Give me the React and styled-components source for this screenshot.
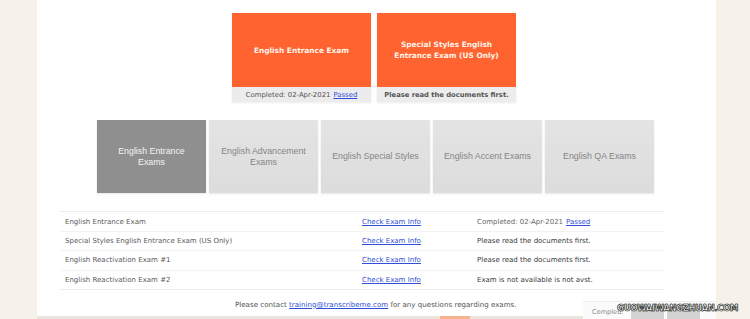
import React from 'react';
import styled, { createGlobalStyle } from 'styled-components';

const GlobalStyle = createGlobalStyle`
  html, body {
    margin: 0;
    padding: 0;
    background: #f6f2ea;
  }
  body {
    width: 750px;
    height: 319px;
    overflow: hidden;
    font-family: "DejaVu Sans", Verdana, sans-serif;
  }
`;

const Page = styled.div`
  position: relative;
  display: flex;
  width: 750px;
  height: 319px;
  background: #f6f2ea;
`;

const Main = styled.div`
  width: 679px;
  margin-left: 37px;
  height: 316px;
  background: #ffffff;
  display: flex;
  flex-direction: column;
`;

const CardsRow = styled.div`
  display: flex;
  gap: 6px;
  margin: 13px 0 0 195px;
`;

const Card = styled.div`
  width: 139px;
  display: flex;
  flex-direction: column;
  box-shadow: 0 1px 2px rgba(0, 0, 0, 0.08);
`;

const CardTitle = styled.div`
  height: 74px;
  background: #ff6430;
  color: #fff4ec;
  font-weight: bold;
  font-size: 7.4px;
  line-height: 11px;
  display: flex;
  align-items: center;
  justify-content: center;
  text-align: center;
  padding: 0 14px;
`;

const CardStatus = styled.div`
  height: 15px;
  background: #ececec;
  color: #555;
  font-size: ${({ strong }) => (strong ? '6.75px' : '6.9px')};
  display: flex;
  align-items: center;
  justify-content: center;
  font-weight: ${({ strong }) => (strong ? 'bold' : 'normal')};
`;

const Link = styled.a`
  color: #2f4fd8;
  text-decoration: underline;
  margin-left: ${({ gap }) => gap || 0}px;
`;

const TabsRow = styled.div`
  display: flex;
  gap: 3px;
  margin: 18px 0 0 60px;
`;

const Tab = styled.div`
  width: 109px;
  height: 73px;
  background: ${({ active }) => (active ? '#8f8f8f' : 'linear-gradient(#e4e4e4, #dcdcdc)')};
  color: ${({ active }) => (active ? '#f4f4f4' : '#858585')};
  font-family: "Liberation Sans", Arial, sans-serif;
  font-size: 8.8px;
  line-height: 10.5px;
  display: flex;
  align-items: center;
  justify-content: center;
  text-align: center;
  padding: 0 10px;
  box-sizing: border-box;
  box-shadow: 0 1px 2px rgba(0, 0, 0, 0.1);
`;

const TabLabel = styled.span`
  max-width: 88px;
  white-space: ${({ nowrap }) => (nowrap ? 'nowrap' : 'normal')};
`;

const Table = styled.div`
  width: 605px;
  margin: 18px 0 0 23px;
  border-top: 1px solid #ececec;
  border-bottom: 1px solid #ececec;
`;

const Row = styled.div`
  display: grid;
  grid-template-columns: 297px 115px 1fr;
  height: 19.2px;
  box-sizing: border-box;
  align-items: center;
  padding-left: 5px;
  font-size: 7px;
  color: #5a5a5a;
  & + & {
    border-top: 1px solid #f3f3f3;
  }
`;

const Status = styled.span`
  color: ${({ strong }) => (strong ? '#3a3a3a' : '#666')};
`;

const Footer = styled.div`
  margin: 10px 0 0 198px;
  font-size: 7.1px;
  color: #555;
`;

const BottomStrip = styled.div`
  position: absolute;
  left: 37px;
  bottom: 0;
  width: 679px;
  height: 3px;
  background: #e9e5de;
  display: flex;
`;

const StripChunk = styled.div`
  margin-left: 403px;
  width: 30px;
  background: #f7b38f;
`;

const CornerBox = styled.div`
  position: absolute;
  left: 583px;
  top: 301px;
  width: 133px;
  height: 18px;
  background: #fbfbfb;
  border-top: 1px solid #eee;
  display: flex;
  align-items: flex-end;
  gap: 3px;
  padding-left: 9px;
  box-sizing: border-box;
`;

const CornerLabel = styled.span`
  font-size: 6.6px;
  color: #888;
  margin-bottom: 3px;
  width: 36px;
`;

const CornerBlock = styled.div`
  width: 33px;
  height: 13px;
  background: #d3d3d3;
`;

const Watermark = styled.div`
  position: absolute;
  right: 12px;
  top: 303px;
  font-family: "DejaVu Sans", Verdana, sans-serif;
  font-weight: bold;
  font-size: 8.4px;
  letter-spacing: -0.3px;
  color: #ffffff;
  -webkit-text-stroke: 0.5px #000;
  text-shadow: 0 0 1px #000;
`;

const rows = [
  { name: 'English Entrance Exam', status: 'Completed: 02-Apr-2021', passed: true },
  { name: 'Special Styles English Entrance Exam (US Only)', status: 'Please read the documents first.', strong: true },
  { name: 'English Reactivation Exam #1', status: 'Please read the documents first.', strong: true },
  { name: 'English Reactivation Exam #2', status: 'Exam is not available is not avst.', strong: true },
];

const tabs = [
  { label: 'English Entrance Exams' },
  { label: 'English Advancement Exams' },
  { label: 'English Special Styles', nowrap: true },
  { label: 'English Accent Exams', nowrap: true },
  { label: 'English QA Exams', nowrap: true },
];

export default function App() {
  return (
    <>
      <GlobalStyle />
      <Page>
        <Main>
          <CardsRow>
            <Card>
              <CardTitle>English Entrance Exam</CardTitle>
              <CardStatus>
                Completed: 02-Apr-2021<Link gap={3}>Passed</Link>
              </CardStatus>
            </Card>
            <Card>
              <CardTitle>Special Styles English Entrance Exam (US Only)</CardTitle>
              <CardStatus strong>Please read the documents first.</CardStatus>
            </Card>
          </CardsRow>

          <TabsRow>
            {tabs.map((t, i) => (
              <Tab key={t.label} active={i === 0}>
                <TabLabel nowrap={t.nowrap}>{t.label}</TabLabel>
              </Tab>
            ))}
          </TabsRow>

          <Table>
            {rows.map((r) => (
              <Row key={r.name}>
                <span>{r.name}</span>
                <Link>Check Exam Info</Link>
                <Status strong={r.strong}>
                  {r.status}
                  {r.passed && <Link gap={3}>Passed</Link>}
                </Status>
              </Row>
            ))}
          </Table>

          <Footer>
            Please contact <Link>training@transcribeme.com</Link> for any questions regarding exams.
          </Footer>
        </Main>

        <BottomStrip>
          <StripChunk />
        </BottomStrip>

        <CornerBox>
          <CornerLabel>Compled:</CornerLabel>
          <CornerBlock />
          <CornerBlock />
        </CornerBox>
        <Watermark>GUOWAIWANGZHUAN.COM</Watermark>
      </Page>
    </>
  );
}
